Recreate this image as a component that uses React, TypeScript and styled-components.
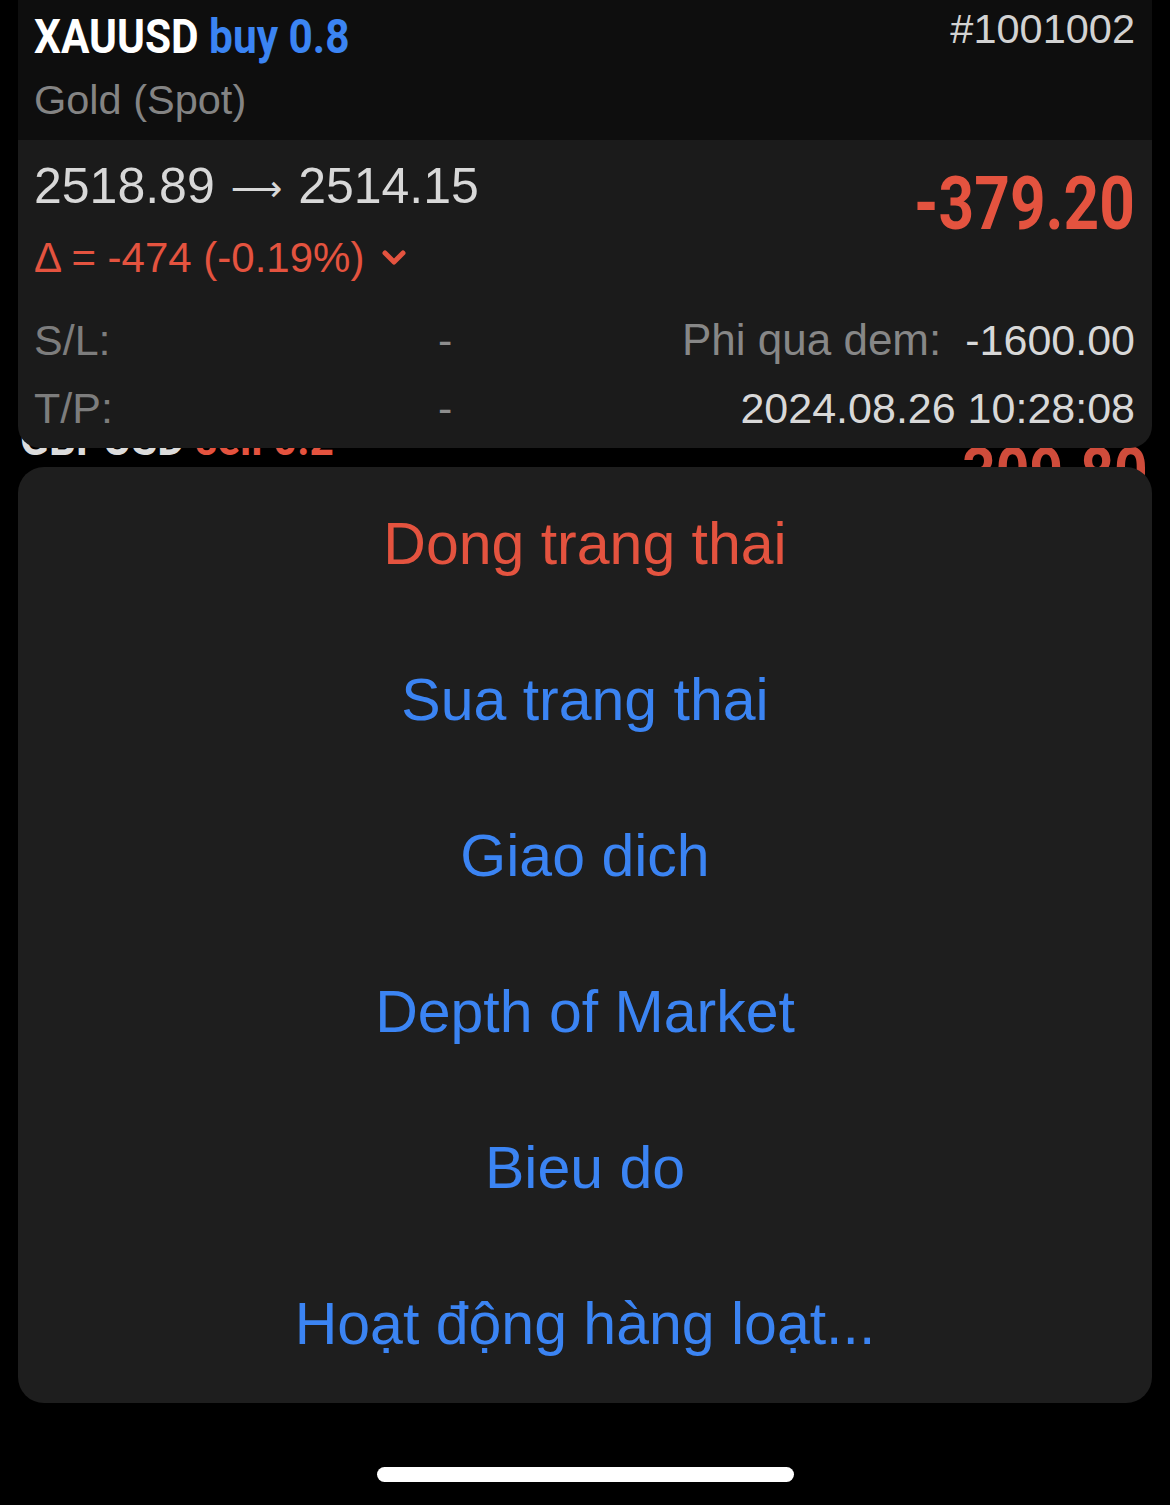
import React from 'react';
import styled, { createGlobalStyle } from 'styled-components';

const GlobalStyle = createGlobalStyle`
  html, body {
    margin: 0;
    padding: 0;
    background: #000;
  }
  body {
    font-family: "Liberation Sans", Arial, sans-serif;
  }
`;

const Page = styled.div`
  width: 1170px;
  height: 1505px;
  background: #000;
  display: flex;
  flex-direction: column;
  align-items: center;
  overflow: hidden;
`;

// bold condensed face, squeezed from Roboto since no narrow font is around
const Narrow = styled.span<{ $origin?: 'left' | 'right'; $squeeze?: number }>`
  display: inline-block;
  font-family: Roboto, "Liberation Sans", sans-serif;
  font-weight: 700;
  white-space: nowrap;
  transform: scaleX(${p => p.$squeeze ?? 0.84});
  transform-origin: ${p => p.$origin ?? 'left'} center;
`;

const Card = styled.div`
  position: relative;
  z-index: 2;
  width: 1134px;
  border-radius: 0 0 22px 22px;
  overflow: hidden;
  background: #1b1b1b;
`;

const Header = styled.div`
  background: #0e0e0e;
  height: 140px;
  box-sizing: border-box;
  padding: 6px 17px 0 16px;
`;

const TitleRow = styled.div`
  display: flex;
  justify-content: space-between;
  align-items: flex-start;
`;

const Title = styled.div`
  font-size: 49px;
  line-height: 60px;
  color: #fff;
`;

const Side = styled.span<{ $tone: 'buy' | 'sell' }>`
  color: ${p => (p.$tone === 'buy' ? '#3b84f3' : '#e4533f')};
`;

const Ticket = styled.div`
  font-size: 41.5px;
  line-height: 46px;
  color: #d2d2d2;
`;

const Subtitle = styled.div`
  margin-top: 9px;
  font-size: 41.5px;
  line-height: 48px;
  color: #848484;
`;

const Body = styled.div`
  padding: 18px 17px 6px 16px;
`;

const PriceRow = styled.div`
  display: flex;
  justify-content: space-between;
  align-items: flex-start;
`;

const PriceCol = styled.div`
  display: flex;
  flex-direction: column;
  gap: 20px;
`;

const Prices = styled.div`
  height: 56px;
  font-size: 50px;
  line-height: 56px;
  color: #d8d8d8;
  white-space: nowrap;
`;

const Arrow = styled.span`
  font-family: "DejaVu Sans", sans-serif;
  font-size: 36px;
  line-height: 0;
  margin: 0 2px;
  vertical-align: 2px;
`;

const Delta = styled.div`
  display: flex;
  align-items: center;
  gap: 18px;
  font-size: 42px;
  line-height: 48px;
  color: #e4533f;
`;

const Profit = styled.div`
  margin-top: 6px;
  font-size: 74px;
  line-height: 80px;
  color: #e4533f;
`;

const InfoGrid = styled.div`
  margin-top: 24px;
  display: grid;
  grid-template-columns: 404px 40px 1fr;
  font-size: 43px;
  line-height: 68px;
`;

const Label = styled.div`
  color: #7d7d7d;
`;

const Dash = styled.div`
  color: #8e8e8e;
`;

const Value = styled.div`
  text-align: right;
  color: #d8d8d8;
  white-space: nowrap;
`;

const Muted = styled.span`
  color: #878787;
  font-size: 44px;
  margin-right: 24px;
`;

const Peek = styled.div`
  position: relative;
  z-index: 0;
  width: 1170px;
  height: 19px;
  box-sizing: border-box;
  padding: 0 22px 0 20px;
  display: flex;
  justify-content: space-between;
  align-items: flex-start;
`;

const PeekTitle = styled.div`
  margin-top: -40px;
  font-size: 49px;
  line-height: 60px;
  color: #dcdcdc;
`;

const PeekProfit = styled.div`
  margin-top: -15px;
  font-size: 70px;
  line-height: 80px;
  color: #cf4c3b;
`;

const Menu = styled.div`
  position: relative;
  z-index: 2;
  width: 1134px;
  border-radius: 26px;
  background: #1e1e1e;
  display: flex;
  flex-direction: column;
`;

const MenuItem = styled.button<{ $danger?: boolean }>`
  height: 156px;
  border: none;
  background: transparent;
  padding: 0 0 2px;
  display: flex;
  align-items: center;
  justify-content: center;
  font-family: "Liberation Sans", Arial, sans-serif;
  font-size: 59px;
  color: ${p => (p.$danger ? '#e4533f' : '#3b84f3')};
`;

const HomeBar = styled.div`
  margin-top: 64px;
  width: 417px;
  height: 15px;
  border-radius: 8px;
  background: #fff;
`;

const Chevron = () => (
  <svg width="24" height="18" viewBox="0 0 24 18">
    <polyline points="3,4 12,13 21,4" fill="none" stroke="#e4533f" strokeWidth="5" strokeLinecap="round" strokeLinejoin="round" />
  </svg>
);

const actions = [
  { label: 'Dong trang thai', danger: true },
  { label: 'Sua trang thai' },
  { label: 'Giao dich' },
  { label: 'Depth of Market' },
  { label: 'Bieu do' },
  { label: 'Hoạt động hàng loạt...' },
];

export default function App() {
  return (
    <>
      <GlobalStyle />
      <Page>
        <Card>
          <Header>
            <TitleRow>
              <Title>
                <Narrow $squeeze={0.865}>
                  XAUUSD <Side $tone="buy">buy 0.8</Side>
                </Narrow>
              </Title>
              <Ticket>#1001002</Ticket>
            </TitleRow>
            <Subtitle>Gold (Spot)</Subtitle>
          </Header>
          <Body>
            <PriceRow>
              <PriceCol>
                <Prices>
                  2518.89 <Arrow>⟶</Arrow> 2514.15
                </Prices>
                <Delta>
                  <span>Δ = -474 (-0.19%)</span>
                  <Chevron />
                </Delta>
              </PriceCol>
              <Profit>
                <Narrow $origin="right">-379.20</Narrow>
              </Profit>
            </PriceRow>
            <InfoGrid>
              <Label>S/L:</Label>
              <Dash>-</Dash>
              <Value>
                <Muted>Phi qua dem:</Muted>-1600.00
              </Value>
              <Label>T/P:</Label>
              <Dash>-</Dash>
              <Value>2024.08.26 10:28:08</Value>
            </InfoGrid>
          </Body>
        </Card>
        <Peek>
          <PeekTitle>
            <Narrow $squeeze={0.865}>
              GBPUSD <Side $tone="sell">sell 0.2</Side>
            </Narrow>
          </PeekTitle>
          <PeekProfit>
            <Narrow $origin="right">-309.80</Narrow>
          </PeekProfit>
        </Peek>
        <Menu>
          {actions.map(a => (
            <MenuItem key={a.label} $danger={a.danger}>
              {a.label}
            </MenuItem>
          ))}
        </Menu>
        <HomeBar />
      </Page>
    </>
  );
}
